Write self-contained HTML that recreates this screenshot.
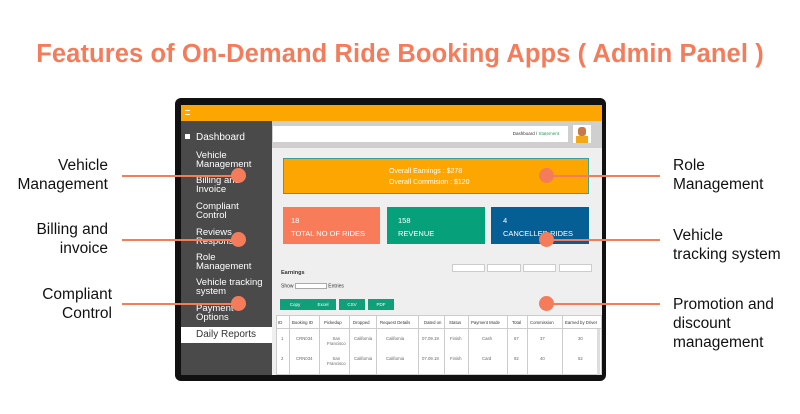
<!DOCTYPE html>
<html><head><meta charset="utf-8"><style>
*{margin:0;padding:0;box-sizing:border-box}
body{width:800px;height:414px;background:#fff;position:relative;overflow:hidden;font-family:"Liberation Sans",sans-serif}
.a{position:absolute}
.lbl{position:absolute;font-size:15.5px;color:#111;line-height:19px}
.line{position:absolute;height:2px;background:#f47c5b}
.dot{position:absolute;width:15px;height:15px;border-radius:50%;background:#f47c5b}
.sb{position:absolute;left:196px;color:#fff;font-size:9.5px;line-height:8.5px}
.card{position:absolute;top:207px;height:37px;color:#fff;font-size:7.5px;white-space:nowrap}
.btn{position:absolute;top:299px;height:11px;background:#0fa07a;color:#fff;font-size:4.5px;text-align:center;line-height:11px}
.th{position:absolute;top:315px;height:60px;border-left:1px solid #ccc}
.r{position:absolute;font-size:4.3px;color:#666;text-align:center;white-space:nowrap}
</style></head><body>
<div class="a" style="left:0;top:40px;width:800px;text-align:center;font-size:25.5px;font-weight:bold;color:#f47c5b;letter-spacing:0.1px">Features of On-Demand Ride Booking Apps ( Admin Panel )</div>

<div class="a" style="left:175px;top:98px;width:431px;height:283px;background:#111;border-radius:6px"></div>
<div class="a" style="left:181px;top:105px;width:421px;height:16px;background:#fda602"></div>
<div class="a" style="left:185px;top:110px;width:5px;height:5px;border-top:1px solid #fff;border-bottom:1px solid #fff"></div>
<div class="a" style="left:181px;top:121px;width:91px;height:254px;background:#4a4a4a"></div>
<div class="a" style="left:272px;top:121px;width:330px;height:254px;background:#efefef"></div>
<div class="a" style="left:272px;top:121px;width:330px;height:27px;background:#cfcfcf"></div>
<div class="a" style="left:273px;top:126px;width:295px;height:16px;background:#fff;font-size:4.5px;text-align:right;padding-right:9px;line-height:16px;color:#333">Dashboard / <span style="color:#2a9d5c">Statement</span></div>
<div class="a" style="left:573px;top:125px;width:18px;height:18px;background:#fff"><div class="a" style="left:5px;top:2px;width:8px;height:9px;border-radius:3px;background:#c6794a"></div><div class="a" style="left:3px;top:11px;width:12px;height:7px;background:#f3a81c"></div></div>

<div class="a" style="left:185px;top:134px;width:5px;height:5px;background:#fff"></div>
<div class="sb" style="top:134px;font-size:10px">Dashboard</div>
<div class="sb" style="top:152px">Vehicle<br>Management</div>
<div class="sb" style="top:177px">Billing and<br>Invoice</div>
<div class="sb" style="top:203px">Compliant<br>Control</div>
<div class="sb" style="top:229px">Reviews<br>Response</div>
<div class="sb" style="top:254px">Role<br>Management</div>
<div class="sb" style="top:279px">Vehicle tracking<br>system</div>
<div class="sb" style="top:305px">Payment<br>Options</div>
<div class="a" style="left:181px;top:327px;width:91px;height:16px;background:#fff;color:#333;font-size:10px;line-height:15px;padding-left:15px">Daily Reports</div>

<div class="a" style="left:283px;top:158px;width:306px;height:36px;background:#fda602;border:1px solid #3ba0a0;color:#fff;font-size:7px;line-height:11px;padding:7px 0 0 105px">Overall Earnings : $278<br>Overall Commision : $120</div>
<div class="card" style="left:283px;width:97px;background:#f87c5a;padding:7px 8px;line-height:13px">18<br>TOTAL NO OF RIDES</div>
<div class="card" style="left:387px;width:98px;background:#06a07a;padding:7px 11px;line-height:13px">158<br>REVENUE</div>
<div class="card" style="left:491px;width:98px;background:#055f95;padding:7px 12px;line-height:13px">4<br>CANCELLED RIDES</div>

<div class="a" style="left:281px;top:270px;font-size:5.5px;font-weight:bold;color:#333">Earnings</div>
<div class="a" style="left:281px;top:283px;font-size:5px;color:#333">Show <span style="display:inline-block;width:32px;height:6px;border:1px solid #aaa;background:#fff;vertical-align:middle"></span> Entries</div>
<div class="a" style="left:452px;top:264px;width:33px;height:8px;background:#fff;border:1px solid #ccc"></div>
<div class="a" style="left:487px;top:264px;width:34px;height:8px;background:#fff;border:1px solid #ccc"></div>
<div class="a" style="left:523px;top:264px;width:33px;height:8px;background:#fff;border:1px solid #ccc"></div>
<div class="a" style="left:559px;top:264px;width:33px;height:8px;background:#fff;border:1px solid #ccc"></div>
<div class="btn" style="left:280px;width:30px">Copy</div>
<div class="btn" style="left:310px;width:26px">Excel</div>
<div class="btn" style="left:339px;width:26px">CSV</div>
<div class="btn" style="left:368px;width:26px">PDF</div>
<div class="a" style="left:276px;top:315px;width:326px;height:60px;background:#fff;border:1px solid #ccc"></div>
<div class="a" style="left:276px;top:328px;width:326px;height:1px;background:#ccc"></div>
<div class="th" style="left:289px"></div><div class="th" style="left:319px"></div><div class="th" style="left:349px"></div><div class="th" style="left:376px"></div><div class="th" style="left:418px"></div><div class="th" style="left:444px"></div><div class="th" style="left:468px"></div><div class="th" style="left:507px"></div><div class="th" style="left:527px"></div><div class="th" style="left:562px"></div>
<div class="a" style="left:597px;top:329px;width:3px;height:46px;background:#ddd"></div>
<div class="r" style="left:278px;top:320px;color:#333">ID</div>
<div class="r" style="left:292px;top:320px;color:#333">Booking ID</div>
<div class="r" style="left:324px;top:320px;color:#333">Pickedup</div>
<div class="r" style="left:353px;top:320px;color:#333">Dropped</div>
<div class="r" style="left:380px;top:320px;color:#333">Request Details</div>
<div class="r" style="left:424px;top:320px;color:#333">Dated on</div>
<div class="r" style="left:449px;top:320px;color:#333">Status</div>
<div class="r" style="left:471px;top:320px;color:#333">Payment Mode</div>
<div class="r" style="left:512px;top:320px;color:#333">Total</div>
<div class="r" style="left:530px;top:320px;color:#333">Commission</div>
<div class="r" style="left:565px;top:320px;color:#333">Earned by Driver</div>
<div class="r" style="left:281px;top:336px">1</div><div class="r" style="left:296px;top:336px">CRN034</div><div class="r" style="left:327px;top:336px">San<br>Francisco</div><div class="r" style="left:354px;top:336px">California</div><div class="r" style="left:386px;top:336px">California</div><div class="r" style="left:422px;top:336px">07.09.18</div><div class="r" style="left:450px;top:336px">Finish</div><div class="r" style="left:482px;top:336px">Cash</div><div class="r" style="left:514px;top:336px">67</div><div class="r" style="left:540px;top:336px">37</div><div class="r" style="left:578px;top:336px">30</div>
<div class="r" style="left:281px;top:356px">2</div><div class="r" style="left:296px;top:356px">CRN034</div><div class="r" style="left:327px;top:356px">San<br>Francisco</div><div class="r" style="left:354px;top:356px">California</div><div class="r" style="left:386px;top:356px">California</div><div class="r" style="left:422px;top:356px">07.09.18</div><div class="r" style="left:450px;top:356px">Finish</div><div class="r" style="left:482px;top:356px">Card</div><div class="r" style="left:514px;top:356px">92</div><div class="r" style="left:540px;top:356px">40</div><div class="r" style="left:578px;top:356px">52</div>

<div class="dot" style="left:231px;top:168px"></div><div class="line" style="left:122px;top:175px;width:112px"></div>
<div class="dot" style="left:231px;top:232px"></div><div class="line" style="left:122px;top:239px;width:112px"></div>
<div class="dot" style="left:231px;top:296px"></div><div class="line" style="left:122px;top:303px;width:112px"></div>
<div class="dot" style="left:539px;top:168px"></div><div class="line" style="left:546px;top:175px;width:114px"></div>
<div class="dot" style="left:539px;top:232px"></div><div class="line" style="left:546px;top:239px;width:114px"></div>
<div class="dot" style="left:539px;top:296px"></div><div class="line" style="left:546px;top:303px;width:114px"></div>

<div class="lbl" style="left:0;width:108px;top:156px;text-align:right">Vehicle<br>Management</div>
<div class="lbl" style="left:0;width:108px;top:220px;text-align:right">Billing and<br>invoice</div>
<div class="lbl" style="left:0;width:112px;top:285px;text-align:right">Compliant<br>Control</div>
<div class="lbl" style="left:673px;top:156px">Role<br>Management</div>
<div class="lbl" style="left:673px;top:226px">Vehicle<br>tracking system</div>
<div class="lbl" style="left:673px;top:295px">Promotion and<br>discount<br>management</div>
</body></html>
